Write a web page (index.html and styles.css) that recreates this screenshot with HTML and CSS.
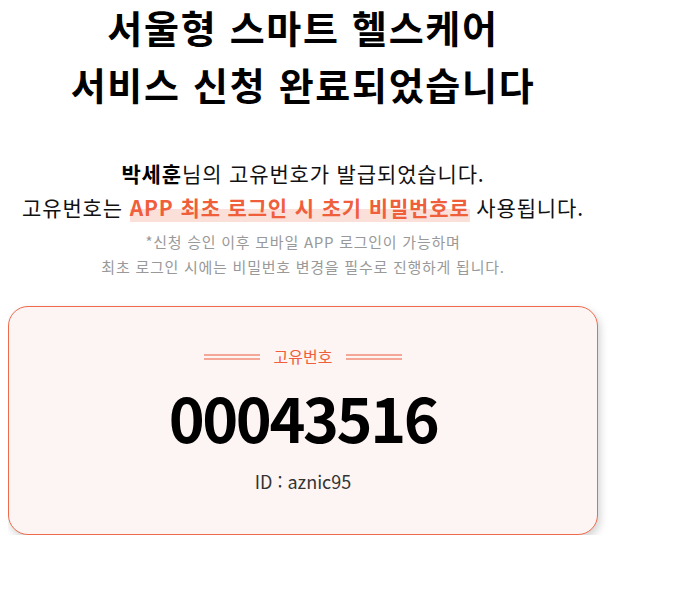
FILE: index.html
```html
<!DOCTYPE html>
<html lang="ko">
<head>
<meta charset="utf-8">
<title>신청 완료</title>
<link rel="stylesheet" href="styles.css">
</head>
<body>
<div class="wrap">
  <h1 class="title">서울형 스마트 헬스케어<br>서비스 신청 완료되었습니다</h1>
  <p class="lead"><strong>박세훈</strong>님의 고유번호가 발급되었습니다.<br>고유번호는 <em class="hl">APP 최초 로그인 시 초기 비밀번호로</em> 사용됩니다.</p>
  <p class="note">*신청 승인 이후 모바일 APP 로그인이 가능하며<br>최초 로그인 시에는 비밀번호 변경을 필수로 진행하게 됩니다.</p>
  <div class="card">
    <div class="label"><span class="dbl"></span><span class="label-text">고유번호</span><span class="dbl"></span></div>
    <div class="number">00043516</div>
    <div class="id">ID : aznic95</div>
  </div>
</div>
</body>
</html>
```
FILE: styles.css
```css
html, body {
  background: #fff;
}
body {
  margin: 0 8px;
  font-family: "Noto Sans CJK KR", "Noto Sans", sans-serif;
  color: #111;
}
.wrap {
  width: 590px;
  text-align: center;
}
.title {
  margin: -2px 0 0;
  font-size: 38px;
  line-height: 57px;
  font-weight: 700;
  color: #000;
  letter-spacing: 1.7px;
}
.lead {
  margin: 44px 0 0;
  font-size: 21px;
  line-height: 34px;
  color: #111;
  letter-spacing: 0.85px;
}
.lead strong {
  font-weight: 700;
  color: #000;
}
.hl {
  font-style: normal;
  font-weight: 700;
  color: #ef5f3c;
  background: linear-gradient(to bottom, transparent 55%, #fbe0da 55%, #fbe0da 100%);
}
.note {
  margin: 5px 0 0;
  font-size: 15px;
  line-height: 25px;
  color: #999;
  letter-spacing: 0.75px;
}
.card {
  margin-top: 27px;
  border: 1px solid #ef6a4b;
  border-radius: 20px;
  background: #fdf5f4;
  box-shadow: 2px 4px 8px rgba(0, 0, 0, 0.18);
  padding: 38px 0 40px;
}
.label {
  display: flex;
  justify-content: center;
  align-items: center;
  gap: 14px;
  height: 22px;
}
.label-text {
  font-size: 16px;
  line-height: 22px;
  color: #ef5f3c;
}
.dbl {
  width: 56px;
  height: 2px;
  border-top: 2px solid #f5a797;
  border-bottom: 2px solid #f5a797;
  margin-top: 2px;
}
.number {
  margin-top: 15px;
  font-size: 61px;
  line-height: 70px;
  font-weight: 700;
  color: #000;
  letter-spacing: -2.4px;
}
.id {
  margin-top: 16px;
  font-size: 18px;
  line-height: 26px;
  color: #333;
}
```
